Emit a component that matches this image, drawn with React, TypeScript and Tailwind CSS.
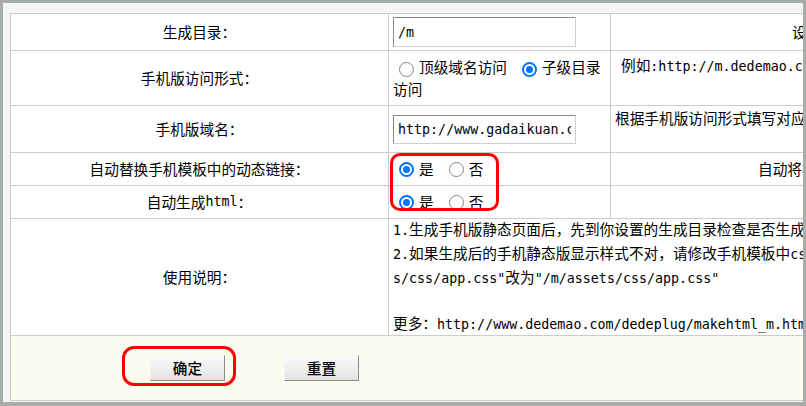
import React from "react";

const M = ({ children }: { children: React.ReactNode }) => (
  <span className="font-['DejaVu_Sans_Mono','Noto_Sans_CJK_SC',monospace] text-[13.33px]">
    {children}
  </span>
);

const Radio = ({ checked }: { checked?: boolean }) =>
  checked ? (
    <span className="inline-block h-[15px] w-[15px] shrink-0 rounded-full border-2 border-[#0075ff] bg-white p-[2px] align-middle">
      <span className="block h-full w-full rounded-full bg-[#0075ff]"></span>
    </span>
  ) : (
    <span className="inline-block h-[15px] w-[15px] shrink-0 rounded-full border-[1.5px] border-[#858585] bg-white align-middle"></span>
  );

const Label = ({ children }: { children: React.ReactNode }) => (
  <div className="flex items-center justify-center bg-white">{children}</div>
);

const YesNo = () => (
  <div className="flex items-center bg-white pl-[10px]">
    <span className="-translate-y-[2px]">
      <Radio checked />
    </span>
    <span className="ml-[5px]">是</span>
    <span className="ml-[15px] -translate-y-[2px]">
      <Radio />
    </span>
    <span className="ml-[5px]">否</span>
  </div>
);

const Button = ({ children }: { children: React.ReactNode }) => (
  <button className="h-[26px] w-[75px] border border-t-[#f4f4f4] border-l-[#f4f4f4] border-r-[#8a8a8a] border-b-[#8a8a8a] bg-linear-to-b from-[#fbfbfb] to-[#e2e2e2] font-medium text-black">
    {children}
  </button>
);

const inputCls =
  "w-[183px] border border-t-[#8a8a8a] border-l-[#8a8a8a] border-r-[#cfcfcf] border-b-[#cfcfcf] bg-white px-[4px] font-['DejaVu_Sans_Mono',monospace] text-[13.33px] text-black outline-none";

export default function App() {
  return (
    <main className="relative h-[406px] w-[806px] bg-[#a6aea8] pt-[3px] pr-[3px] pb-[4px] pl-[3px] font-['Noto_Sans_CJK_SC',sans-serif] text-[14.67px] leading-[22px] text-black">
      <div className="h-full w-full overflow-hidden bg-[#f5f5f5] pt-[10px] pl-[7px]">
        <div className="grid w-[1100px] grid-cols-[377px_221px_1fr] grid-rows-[36px_54px_46px_32px_32px_116px_64px] gap-px bg-[#cccccc] p-px">
          {/* row 1 */}
          <Label>生成目录：</Label>
          <div className="flex items-center bg-white pl-[4px]">
            <input className={`${inputCls} h-[30px]`} defaultValue="/m" readOnly />
          </div>
          <div className="flex items-center whitespace-nowrap bg-white pl-[181px]">
            设置生成手机版静态页面的目录
          </div>

          {/* row 2 */}
          <Label>手机版访问形式：</Label>
          <div className="flex items-center bg-white pl-[4px]">
            <div>
              <span className="ml-[6px]">
                <Radio />
              </span>
              <span className="ml-[5px]">顶级域名访问</span>
              <span className="ml-[15px]">
                <Radio checked />
              </span>
              <span className="ml-[5px]">子级目录</span>
              <br />
              访问
            </div>
          </div>
          <div className="flex flex-col justify-center whitespace-nowrap bg-white pl-[10px]">
            <div>
              例如<M>:http://m.dedemao.com</M>
            </div>
            <div className="pl-[260px]">
              <M>http://www.dedemao.com/m</M>
            </div>
          </div>

          {/* row 3 */}
          <Label>手机版域名：</Label>
          <div className="flex items-center bg-white pl-[4px]">
            <input
              className={`${inputCls} h-[29px]`}
              defaultValue="http://www.gadaikuan.com"
              readOnly
            />
          </div>
          <div className="flex flex-col justify-center whitespace-nowrap bg-white pl-[4px]">
            <div>根据手机版访问形式填写对应的域名或目录地址</div>
            <div className="pl-[260px]">如有疑问请查看使用说明</div>
          </div>

          {/* row 4 */}
          <Label>自动替换手机模板中的动态链接：</Label>
          <YesNo />
          <div className="flex items-center whitespace-nowrap bg-white pl-[147px]">
            自动将模板中的动态链接替换为静态链接
          </div>

          {/* row 5 */}
          <Label>
            自动生成<M>html</M>：
          </Label>
          <YesNo />
          <div className="bg-white"></div>

          {/* row 6 */}
          <Label>使用说明：</Label>
          <div className="col-span-2 flex flex-col justify-center whitespace-nowrap bg-white pl-[4px]">
            <div>
              <M>1.</M>生成手机版静态页面后，先到你设置的生成目录检查是否生成成功
            </div>
            <div>
              <M>2.</M>如果生成后的手机静态版显示样式不对，请修改手机模板中<M>css</M>路径
            </div>
            <div>
              <M>s/css/app.css"</M>改为<M>"/m/assets/css/app.css"</M>
            </div>
            <div>&nbsp;</div>
            <div>
              更多：<M>http://www.dedemao.com/dedeplug/makehtml_m.html</M>
            </div>
          </div>

          {/* footer */}
          <div className="col-span-3 flex items-center gap-[59px] bg-[#f9fcef] pl-[139px]">
            <Button>确定</Button>
            <Button>重置</Button>
          </div>
        </div>
      </div>

      {/* red annotation marks */}
      <div className="pointer-events-none absolute top-[153px] left-[390px] h-[58px] w-[109px] rounded-[10px] border-[3px] border-[#ff0000]"></div>
      <div className="pointer-events-none absolute top-[346px] left-[122px] h-[40px] w-[114px] rounded-[12px] border-[3px] border-[#ff0000]"></div>
    </main>
  );
}
